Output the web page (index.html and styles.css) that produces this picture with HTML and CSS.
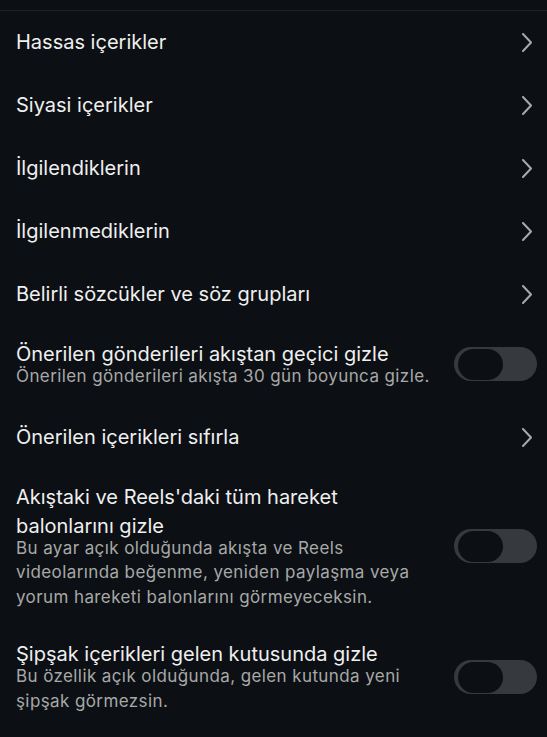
FILE: index.html
```html
<!DOCTYPE html>
<html lang="tr">

<head>
    <meta charset="UTF-8">
    <meta name="viewport" content="width=device-width, initial-scale=1.0">
    <title>İçerik tercihleri</title>
    <link rel="stylesheet" href="styles.css">
</head>

<body>
    <div class="settings">
        <a class="row" href="#">
            <span class="title">Hassas içerikler</span>
            <svg class="chevron" viewBox="0 0 10 19"><path d="M1 1 L9 9.5 L1 18" /></svg>
        </a>
        <a class="row" href="#">
            <span class="title">Siyasi içerikler</span>
            <svg class="chevron" viewBox="0 0 10 19"><path d="M1 1 L9 9.5 L1 18" /></svg>
        </a>
        <a class="row" href="#">
            <span class="title">İlgilendiklerin</span>
            <svg class="chevron" viewBox="0 0 10 19"><path d="M1 1 L9 9.5 L1 18" /></svg>
        </a>
        <a class="row" href="#">
            <span class="title">İlgilenmediklerin</span>
            <svg class="chevron" viewBox="0 0 10 19"><path d="M1 1 L9 9.5 L1 18" /></svg>
        </a>
        <a class="row" href="#">
            <span class="title">Belirli sözcükler ve söz grupları</span>
            <svg class="chevron" viewBox="0 0 10 19"><path d="M1 1 L9 9.5 L1 18" /></svg>
        </a>

        <div class="row toggle-row">
            <div class="text">
                <div class="title">Önerilen gönderileri akıştan geçici gizle</div>
                <div class="sub">Önerilen gönderileri akışta 30 gün boyunca gizle.</div>
            </div>
            <span class="switch"><span class="knob"></span></span>
        </div>

        <a class="row" href="#">
            <span class="title">Önerilen içerikleri sıfırla</span>
            <svg class="chevron" viewBox="0 0 10 19"><path d="M1 1 L9 9.5 L1 18" /></svg>
        </a>

        <div class="row toggle-row">
            <div class="text">
                <div class="title">Akıştaki ve Reels'daki tüm hareket balonlarını gizle</div>
                <div class="sub">Bu ayar açık olduğunda akışta ve Reels videolarında beğenme, yeniden paylaşma veya yorum hareketi balonlarını görmeyeceksin.</div>
            </div>
            <span class="switch"><span class="knob"></span></span>
        </div>

        <div class="row toggle-row">
            <div class="text">
                <div class="title">Şipşak içerikleri gelen kutusunda gizle</div>
                <div class="sub">Bu özellik açık olduğunda, gelen kutunda yeni şipşak görmezsin.</div>
            </div>
            <span class="switch"><span class="knob"></span></span>
        </div>
    </div>
</body>

</html>
```

FILE: styles.css
```css
body {
    margin: 0;
    padding: 0;
    background: #0c1014;
    font-family: Inter, "Noto Sans", sans-serif;
    color: #efefef;
}

.settings {
    margin-top: 10px;
    border-top: 1px solid #1f2328;
}

.row {
    display: flex;
    align-items: center;
    justify-content: space-between;
    padding: 17px 10px 17px 16px;
    color: inherit;
    text-decoration: none;
}

.title {
    font-size: 20px;
    line-height: 29px;
}

.chevron {
    width: 10px;
    height: 19px;
    margin-right: 5px;
    fill: none;
    stroke: #a8a8a8;
    stroke-width: 2;
    stroke-linecap: round;
    stroke-linejoin: round;
}

.toggle-row {
    padding-top: 14px;
    gap: 20px;
}

.text {
    flex: 1;
}

.sub {
    margin-top: -5px;
    font-size: 17px;
    line-height: 24.5px;
    letter-spacing: 0.4px;
    color: #a8a8a8;
}

.switch {
    flex: none;
    display: flex;
    align-items: center;
    width: 83px;
    height: 34px;
    padding: 2px 4px 1px;
    box-sizing: border-box;
    border-radius: 17px;
    background: #363a3f;
}

.knob {
    width: 45px;
    height: 31px;
    border-radius: 16px;
    background: #0c1014;
}
```
